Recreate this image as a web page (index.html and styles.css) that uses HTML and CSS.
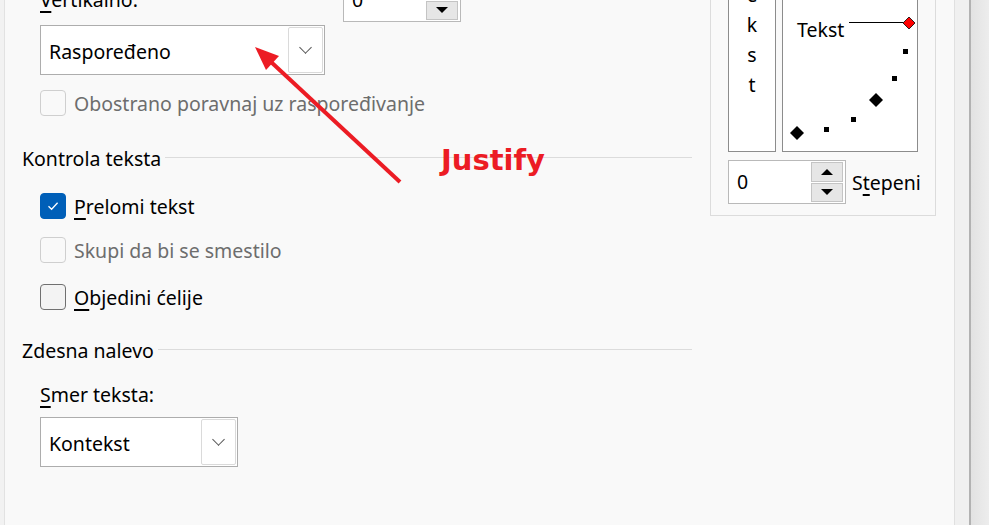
FILE: index.html
```html
<!DOCTYPE html>
<html lang="sr">
<head>
    <meta charset="UTF-8">
    <meta name="viewport" content="width=device-width, initial-scale=1.0">
    <title>Oblikovanje ćelija - Poravnavanje</title>
    <link rel="stylesheet" href="styles.css">
</head>
<body>
    <div class="window">
        <div class="pane">
            <div class="left">
                <div class="top-row">
                    <div class="field">
                        <div class="label"><u>V</u>ertikalno:</div>
                        <div class="combo wide">
                            <span class="combo-text">Raspoređeno</span>
                            <span class="combo-btn"><span class="chevron"></span></span>
                        </div>
                    </div>
                    <div class="spin top-spin">
                        <span class="spin-value">0</span>
                        <span class="spin-btns">
                            <span class="spin-btn"><span class="tri up"></span></span>
                            <span class="spin-btn"><span class="tri down"></span></span>
                        </span>
                    </div>
                </div>

                <label class="check disabled first">
                    <span class="box"></span>
                    Obostrano poravnaj uz raspoređivanje
                </label>

                <div class="group-title">
                    <span>Kontrola teksta</span>
                    <span class="rule"></span>
                </div>

                <label class="check wrap">
                    <span class="box checked">
                        <svg width="14" height="14" viewBox="0 0 14 14"><path d="M2.5 7.2 L5.6 10.2 L11.6 3.8" fill="none" stroke="#fff" stroke-width="1.3"/></svg>
                    </span>
                    <span><u>P</u>relomi tekst</span>
                </label>
                <label class="check disabled shrink">
                    <span class="box"></span>
                    Skupi da bi se smestilo
                </label>
                <label class="check merge">
                    <span class="box plain"></span>
                    <span><u>O</u>bjedini ćelije</span>
                </label>

                <div class="group-title rtl">
                    <span>Zdesna nalevo</span>
                    <span class="rule"></span>
                </div>

                <div class="label smer"><u>S</u>mer teksta:</div>
                <div class="combo narrow">
                    <span class="combo-text">Kontekst</span>
                    <span class="combo-btn"><span class="chevron"></span></span>
                </div>
            </div>

            <div class="orient">
                <div class="orient-boxes">
                    <div class="vertical-text">
                        <span>T</span><span>e</span><span>k</span><span>s</span><span>t</span>
                    </div>
                    <div class="dial">
                        <svg width="134" height="230" viewBox="0 0 134 230">
                            <text x="14" y="116" class="dial-text">Tekst</text>
                            <line x1="66" y1="101.5" x2="120" y2="101.5" stroke="#000" stroke-width="1"/>
                            <polygon points="126,96 132,102 126,108 120,102" fill="#f00" stroke="#000" stroke-width="0.8"/>
                            <rect x="120" y="128" width="5" height="5" fill="#000"/>
                            <rect x="109" y="155" width="5" height="5" fill="#000"/>
                            <polygon points="93,172 100,179 93,186 86,179" fill="#000"/>
                            <rect x="68" y="196" width="5" height="5" fill="#000"/>
                            <rect x="41" y="206" width="5" height="5" fill="#000"/>
                            <polygon points="14,205 21,212 14,219 7,212" fill="#000"/>
                        </svg>
                    </div>
                </div>
                <div class="degree-row">
                    <div class="spin">
                        <span class="spin-value">0</span>
                        <span class="spin-btns">
                            <span class="spin-btn"><span class="tri up"></span></span>
                            <span class="spin-btn"><span class="tri down"></span></span>
                        </span>
                    </div>
                    <span class="degree-label">S<u>t</u>epeni</span>
                </div>
            </div>
        </div>
        <div class="band"></div>
        <div class="edge"></div>
        <div class="outside"></div>
    </div>

    <!-- annotation drawn over the dialog -->
    <svg class="arrow" width="989" height="525" viewBox="0 0 989 525">
        <line x1="400" y1="182" x2="270" y2="61" stroke="#ec1c24" stroke-width="4"/>
        <polygon points="255,47 279,56 266,70" fill="#ec1c24"/>
    </svg>
    <div class="justify">Justify</div>
</body>
</html>
```

FILE: styles.css
```css
* {
    box-sizing: border-box;
}
body {
    margin: 0;
    background-color: #f2f2f2;
    font-family: "Noto Sans", "Open Sans", sans-serif;
    font-size: 19.5px;
    color: #000;
    overflow: hidden;
    position: relative;
}
u {
    text-decoration-thickness: 2px;
    text-underline-offset: 4px;
}
.window {
    display: flex;
    height: 525px;
}
.pane {
    width: 951px;
    margin-left: 4px;
    display: flex;
    background-color: #f9f9f9;
    border-left: 1px solid #e2e2e2;
    border-right: 1px solid #e0e0e0;
}
.band {
    width: 14px;
    background-color: #f0f0f0;
}
.edge {
    width: 2px;
    background-color: #b2b2b2;
}
.outside {
    flex: 1;
    background: linear-gradient(to right, #e2e2e2, #ededed);
}

/* left column */
.left {
    width: 687px;
    display: flex;
    flex-direction: column;
}
.top-row {
    display: flex;
    margin-top: -22px;
    padding-left: 35px;
}
.field {
    width: 285px;
}
.label {
    line-height: 28px;
    height: 28px;
}
.field .label {
    margin-top: 8px;
}
.combo {
    display: flex;
    align-items: center;
    height: 50px;
    background-color: #fff;
    border: 1px solid #adadad;
    padding: 1px;
}
.field .combo {
    margin-top: 11px;
}
.combo.wide {
    width: 285px;
}
.combo.narrow {
    width: 198px;
    margin-left: 35px;
    margin-top: 8px;
}
.combo-text {
    flex: 1;
    padding-left: 7px;
    padding-top: 3px;
}
.combo-btn {
    width: 35px;
    height: 46px;
    border: 1px solid #dadada;
    border-radius: 2px;
    display: flex;
    align-items: center;
    justify-content: center;
}
.chevron {
    width: 9px;
    height: 9px;
    border-right: 1px solid #555;
    border-bottom: 1px solid #555;
    transform: rotate(45deg);
    margin-top: -5px;
}

/* spin boxes */
.spin {
    flex-shrink: 0;
    width: 118px;
    height: 44px;
    display: flex;
    background-color: #fff;
    border: 1px solid #b9b9b9;
    padding: 1px 2px 1px 1px;
}
.top-spin {
    margin-left: 18px;
}
.spin-value {
    flex: 1;
    padding-left: 7px;
    line-height: 40px;
}
.spin-btns {
    width: 32px;
    display: flex;
    flex-direction: column;
    gap: 1px;
}
.spin-btn {
    flex: 1;
    background-color: #e6e6e6;
    border: 1px solid #c4c4c4;
    display: flex;
    align-items: center;
    justify-content: center;
}
.tri {
    width: 0;
    height: 0;
    border-left: 6px solid transparent;
    border-right: 6px solid transparent;
}
.tri.up {
    border-bottom: 6px solid #000;
}
.tri.down {
    border-top: 6px solid #000;
}

/* checkboxes */
.check {
    display: flex;
    align-items: center;
    gap: 8px;
    height: 26px;
    padding-left: 35px;
}
.check.first {
    margin-top: 15px;
}
.check.wrap {
    margin-top: 21px;
}
.check.shrink {
    margin-top: 18px;
}
.check.merge {
    margin-top: 21px;
}
.check.disabled {
    color: #6d6d6d;
}
.box {
    flex-shrink: 0;
    width: 26px;
    height: 26px;
    border-radius: 4px;
    border: 1px solid #cfcfcf;
    background-color: #f9f9f9;
    display: flex;
    align-items: center;
    justify-content: center;
}
.box.checked {
    background-color: #005fb8;
    border-color: #005fb8;
}
.box.plain {
    border: 1px solid #707070;
    background-color: #f3f3f3;
}

/* group titles */
.group-title {
    display: flex;
    align-items: center;
    height: 28px;
    padding-left: 17px;
    margin-top: 28px;
}
.group-title.rtl {
    margin-top: 26px;
}
.rule {
    flex: 1;
    height: 1px;
    background-color: #dcdcdc;
    margin-left: 4px;
    margin-top: -2px;
}
.smer {
    padding-left: 35px;
    margin-top: 17px;
}

/* orientation group */
.orient {
    align-self: flex-start;
    width: 226px;
    margin-left: 18px;
    margin-top: -100px;
    border: 1px solid #dcdcdc;
    padding: 19px 17px 11px 17px;
}
.orient-boxes {
    display: flex;
    gap: 6px;
}
.vertical-text {
    width: 48px;
    height: 232px;
    background-color: #fff;
    border: 1px solid #8c8c8c;
    padding-top: 29px;
    display: flex;
    flex-direction: column;
    align-items: center;
}
.vertical-text span {
    line-height: 30px;
}
.dial {
    width: 136px;
    height: 232px;
    background-color: #fff;
    border: 1px solid #8c8c8c;
}
.dial svg {
    display: block;
}
.dial-text {
    font-family: "Noto Sans", "Open Sans", sans-serif;
    font-size: 19.5px;
}
.degree-row {
    display: flex;
    align-items: center;
    gap: 6px;
    margin-top: 8px;
}

/* annotation */
.arrow {
    position: absolute;
    left: 0;
    top: 0;
}
.justify {
    position: absolute;
    left: 441px;
    top: 143px;
    font-family: "DejaVu Sans", Verdana, sans-serif;
    font-weight: bold;
    font-size: 29px;
    color: #ec1c24;
}
```
